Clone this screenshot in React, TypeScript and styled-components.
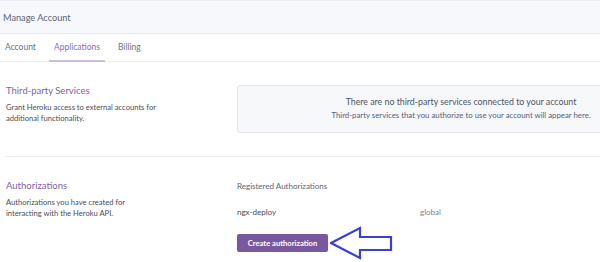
import styled, { createGlobalStyle } from "styled-components";

const GlobalStyle = createGlobalStyle`
  html, body {
    margin: 0;
    padding: 0;
    background: #fff;
  }
  body {
    font-family: Lato, "Open Sans", sans-serif;
    color: #3f3f44;
  }
`;

const tabs = ["Account", "Applications", "Billing"];

export default function App() {
  return (
    <Page>
      <GlobalStyle />
      <Header>Manage Account</Header>
      <TabBar>
        {tabs.map((t) => (
          <Tab key={t} $active={t === "Applications"}>
            {t}
          </Tab>
        ))}
      </TabBar>

      <Section $bottom={23}>
        <Info>
          <SectionTitle>Third-party Services</SectionTitle>
          <Description>
            Grant Heroku access to external accounts for
            <br />
            additional functionality.
          </Description>
        </Info>
        <EmptyBox>
          <EmptyTitle>There are no third-party services connected to your account</EmptyTitle>
          <EmptyText>Third-party services that you authorize to use your account will appear here.</EmptyText>
        </EmptyBox>
      </Section>

      <Divider />

      <Section>
        <Info>
          <SectionTitle>Authorizations</SectionTitle>
          <Description>
            Authorizations you have created for
            <br />
            interacting with the Heroku API.
          </Description>
        </Info>
        <AuthList>
          <ListLabel>Registered Authorizations</ListLabel>
          <AuthRow>
            <AuthName>ngx-deploy</AuthName>
            <AuthScope>global</AuthScope>
          </AuthRow>
          <ButtonRow>
            <CreateButton>Create authorization</CreateButton>
            <Arrow width="64" height="34" viewBox="0 0 64 34">
              <path
                d="M1 17 L30 2 L30 11 L61 11 L61 24 L30 24 L30 32 Z"
                fill="none"
                stroke="#3b40cf"
                strokeWidth="2.2"
                strokeLinejoin="miter"
              />
            </Arrow>
          </ButtonRow>
        </AuthList>
      </Section>
    </Page>
  );
}

const Page = styled.div`
  width: 600px;
  height: 262px;
  overflow: hidden;
`;

const Header = styled.div`
  height: 34px;
  box-sizing: border-box;
  display: flex;
  align-items: center;
  padding-left: 3px;
  background: #f7f8fb;
  border-top: 1px solid #eeeff4;
  border-bottom: 1px solid #e8e9ef;
  font-size: 9.2px;
  color: #5a6579;
`;

const TabBar = styled.div`
  display: flex;
  height: 27px;
  border-bottom: 1px solid #eeeef2;
`;

const Tab = styled.div<{ $active?: boolean }>`
  display: flex;
  align-items: center;
  padding: 0 5px;
  margin-right: 8px;
  margin-bottom: -1px;
  font-size: 8.5px;
  color: ${(p) => (p.$active ? "#8a6db3" : "#66718a")};
  border-bottom: 2px solid ${(p) => (p.$active ? "#cbbde0" : "transparent")};
`;

const Section = styled.div<{ $bottom?: number }>`
  display: grid;
  grid-template-columns: 231px 448px;
  align-items: start;
  padding: 23px 0 ${(p) => p.$bottom ?? 0}px 6px;
`;

const Info = styled.div`
  display: flex;
  flex-direction: column;
`;

const SectionTitle = styled.div`
  font-size: 9.5px;
  line-height: 12px;
  color: #7e5fa8;
  margin-bottom: 5px;
`;

const Description = styled.div`
  font-size: 7.6px;
  line-height: 11px;
  color: #4a4d57;
`;

const EmptyBox = styled.div`
  height: 48px;
  box-sizing: border-box;
  background: #f7f8fa;
  border: 1px solid #e4e5ea;
  border-radius: 3px;
  display: flex;
  flex-direction: column;
  align-items: center;
  justify-content: center;
  gap: 3px;
  padding-bottom: 2px;
`;

const EmptyTitle = styled.div`
  font-size: 8.8px;
  line-height: 11px;
  color: #4b5468;
`;

const EmptyText = styled.div`
  font-size: 7.8px;
  line-height: 10px;
  color: #56607a;
`;

const Divider = styled.div`
  height: 1px;
  margin-left: 5px;
  background: #eeecf6;
`;

const AuthList = styled.div`
  display: flex;
  flex-direction: column;
`;

const ListLabel = styled.div`
  font-size: 8px;
  line-height: 12px;
  color: #5a6579;
`;

const AuthRow = styled.div`
  display: grid;
  grid-template-columns: 183px 1fr;
  margin-top: 14px;
  font-size: 8px;
  line-height: 12px;
`;

const AuthName = styled.div`
  color: #4a4d57;
`;

const AuthScope = styled.div`
  color: #7b8294;
`;

const ButtonRow = styled.div`
  display: flex;
  align-items: center;
  margin-top: 8px;
`;

const CreateButton = styled.button`
  width: 91px;
  height: 18px;
  padding: 0;
  border: none;
  border-radius: 2px;
  background: #79589f;
  color: #fff;
  font-family: Lato, "Open Sans", sans-serif;
  font-weight: 700;
  font-size: 7.6px;
`;

const Arrow = styled.svg`
  margin-left: 2px;
`;
